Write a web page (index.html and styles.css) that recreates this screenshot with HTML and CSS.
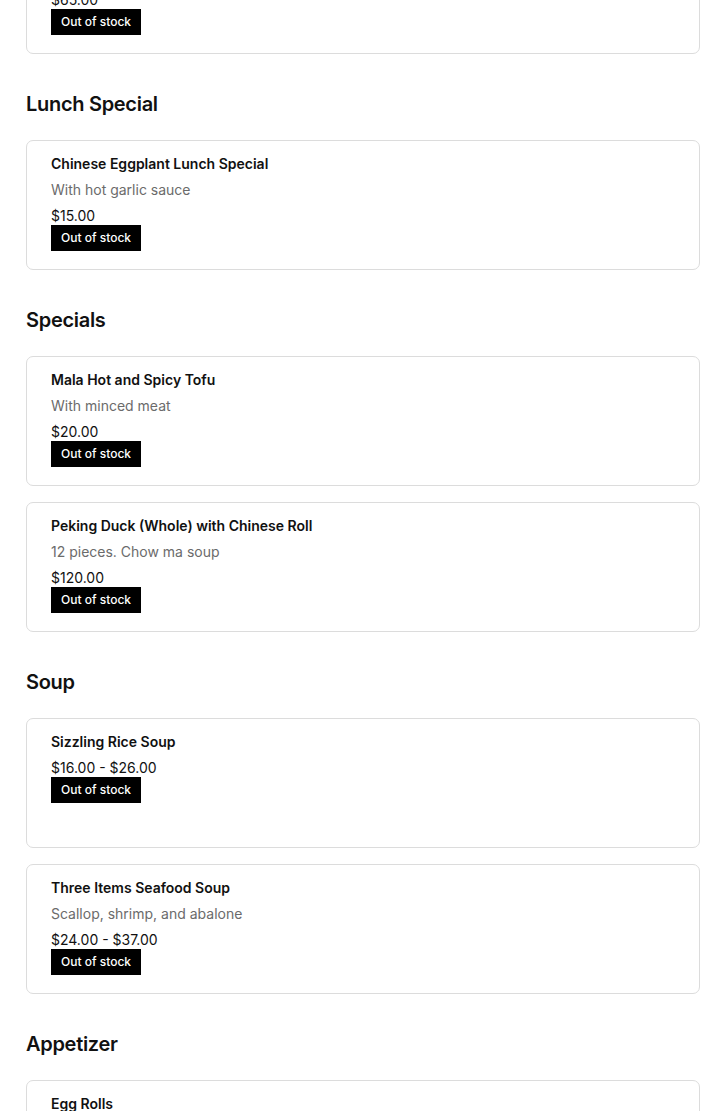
FILE: index.html
```html
<!DOCTYPE html>
<html lang="en">
<head>
<meta charset="utf-8">
<title>Menu</title>
<link rel="stylesheet" href="styles.css">
</head>
<body>
<main class="menu">
  <section class="category category-first">
    <article class="item">
      <h3 class="item-name">Fried Seafood Platter</h3>
      <p class="item-desc">Shrimp, scallop and squid</p>
      <p class="item-price">$65.00</p>
      <span class="badge">Out of stock</span>
    </article>
  </section>

  <section class="category">
    <h2 class="category-title">Lunch Special</h2>
    <div class="items">
      <article class="item">
        <h3 class="item-name">Chinese Eggplant Lunch Special</h3>
        <p class="item-desc">With hot garlic sauce</p>
        <p class="item-price">$15.00</p>
        <span class="badge">Out of stock</span>
      </article>
    </div>
  </section>

  <section class="category">
    <h2 class="category-title">Specials</h2>
    <div class="items">
      <article class="item">
        <h3 class="item-name">Mala Hot and Spicy Tofu</h3>
        <p class="item-desc">With minced meat</p>
        <p class="item-price">$20.00</p>
        <span class="badge">Out of stock</span>
      </article>
      <article class="item">
        <h3 class="item-name">Peking Duck (Whole) with Chinese Roll</h3>
        <p class="item-desc">12 pieces. Chow ma soup</p>
        <p class="item-price">$120.00</p>
        <span class="badge">Out of stock</span>
      </article>
    </div>
  </section>

  <section class="category">
    <h2 class="category-title">Soup</h2>
    <div class="items">
      <article class="item">
        <h3 class="item-name">Sizzling Rice Soup</h3>
        <p class="item-price">$16.00 - $26.00</p>
        <span class="badge">Out of stock</span>
      </article>
      <article class="item">
        <h3 class="item-name">Three Items Seafood Soup</h3>
        <p class="item-desc">Scallop, shrimp, and abalone</p>
        <p class="item-price">$24.00 - $37.00</p>
        <span class="badge">Out of stock</span>
      </article>
    </div>
  </section>

  <section class="category">
    <h2 class="category-title">Appetizer</h2>
    <div class="items">
      <article class="item">
        <h3 class="item-name">Egg Rolls</h3>
        <p class="item-desc">Two pieces</p>
        <p class="item-price">$6.00</p>
        <span class="badge">Out of stock</span>
      </article>
    </div>
  </section>
</main>
</body>
</html>
```

FILE: styles.css
```css
* { box-sizing: border-box; }

html, body {
  margin: 0;
  padding: 0;
  background: #ffffff;
}

body {
  font-family: Inter, "Noto Sans", "Liberation Sans", sans-serif;
  color: #111111;
  overflow: hidden;
}

.menu {
  padding: 0 26px;
}

.category-first {
  margin-top: -76px;
}

.category {
  display: flex;
  flex-direction: column;
}

.category + .category {
  padding-top: 36px;
}

.category-title {
  margin: 0 0 22px;
  font-size: 20px;
  line-height: 28px;
  font-weight: 600;
  letter-spacing: -0.3px;
  color: #111111;
}

.items {
  display: flex;
  flex-direction: column;
  gap: 16px;
}

.item {
  display: flex;
  flex-direction: column;
  align-items: flex-start;
  min-height: 130px;
  padding: 12px 24px 18px;
  border: 1px solid #dcdcdc;
  border-radius: 7px;
  background: #ffffff;
}

.item-name {
  margin: 0;
  font-size: 14px;
  line-height: 22px;
  font-weight: 600;
  color: #111111;
}

.item-desc {
  margin: 4px 0 0;
  font-size: 14px;
  line-height: 22px;
  color: #6b6b6b;
}

.item-price {
  margin: 6px 0 0;
  font-size: 14px;
  line-height: 18px;
  color: #111111;
}

.badge {
  display: inline-block;
  height: 26px;
  line-height: 26px;
  padding: 0 10px;
  background: #000000;
  color: #ffffff;
  font-size: 12px;
  font-weight: 500;
}
```
